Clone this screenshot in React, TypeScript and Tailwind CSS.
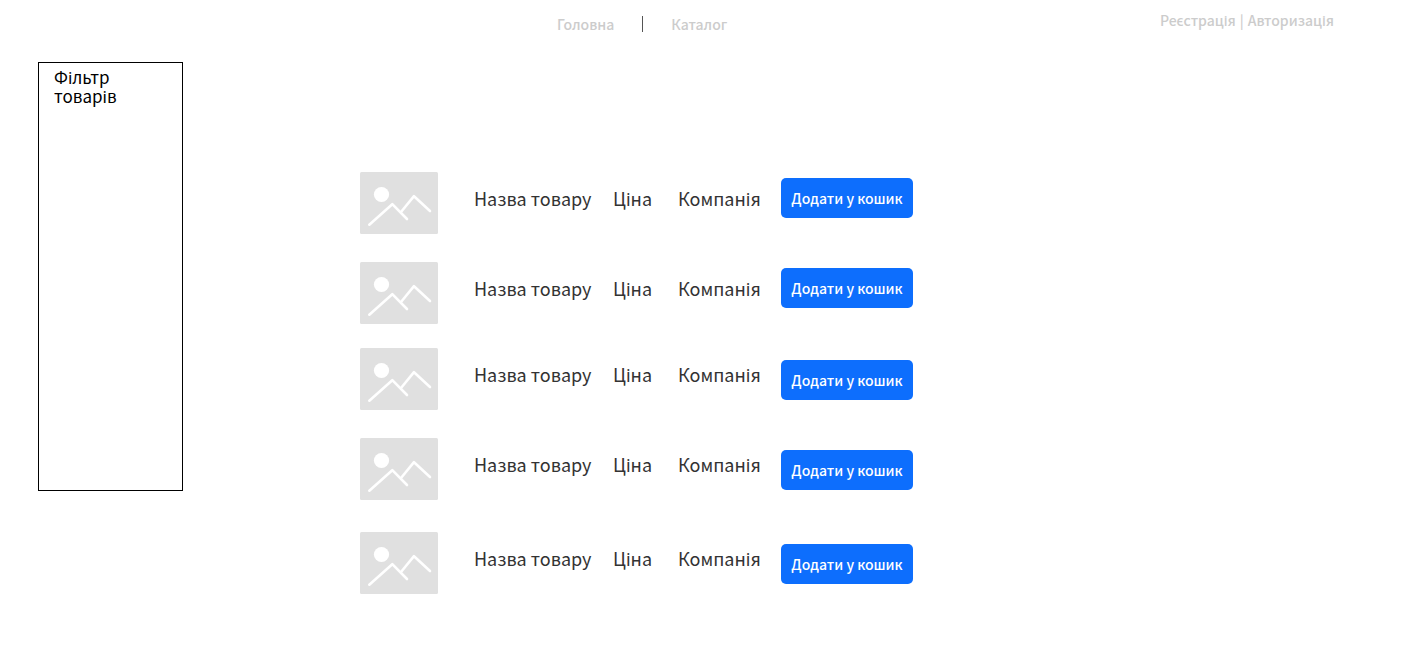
type Product = {
  id: number;
  name: string;
  price: string;
  company: string;
  rowSpacing: string;
  buttonSpacing: string;
};

const base = { name: 'Назва товару', price: 'Ціна', company: 'Компанія' };

const products: Product[] = [
  { id: 1, ...base, rowSpacing: 'mt-0', buttonSpacing: 'mt-1.5' },
  { id: 2, ...base, rowSpacing: 'mt-7', buttonSpacing: 'mt-1.5' },
  { id: 3, ...base, rowSpacing: 'mt-6', buttonSpacing: 'mt-3' },
  { id: 4, ...base, rowSpacing: 'mt-7', buttonSpacing: 'mt-3' },
  { id: 5, ...base, rowSpacing: 'mt-8', buttonSpacing: 'mt-3' },
];

function ImagePlaceholder() {
  return (
    <svg viewBox="0 0 78 62" className="h-[62px] w-[78px] shrink-0" aria-hidden="true">
      <rect width="78" height="62" rx="1.5" fill="#e0e0e0" />
      <circle cx="21.5" cy="22.5" r="7.6" fill="#fff" />
      <g fill="none" stroke="#fff" strokeWidth="2.6" strokeLinecap="round" strokeLinejoin="round">
        <path d="M9.3 52.7 L32.3 32.2 L47 47" />
        <path d="M41 40 L54 24.2 L70 39" />
      </g>
    </svg>
  );
}

function ProductRow({ product }: { product: Product }) {
  return (
    <li className={`flex items-start ${product.rowSpacing}`}>
      <ImagePlaceholder />
      <div className="ml-9 flex h-13 items-center text-[18px] leading-6 whitespace-nowrap text-[#333333]">
        <span className="w-[139px]">{product.name}</span>
        <span className="w-[65px]">{product.price}</span>
        <span className="w-[103px]">{product.company}</span>
      </div>
      <button
        type="button"
        className={`h-10 w-[132px] shrink-0 rounded-[5px] bg-[#0d6efd] text-[14px] leading-6 font-medium whitespace-nowrap text-white ${product.buttonSpacing}`}
      >
        Додати у кошик
      </button>
    </li>
  );
}

export default function App() {
  return (
    <div className="min-h-screen bg-white font-['Noto_Sans_CJK_SC','Noto_Sans',sans-serif]">
      <header className="flex h-[62px] items-start pr-[85px] pl-[557px] text-[14px] leading-6 font-medium whitespace-nowrap text-[#cccccc]">
        <nav className="flex items-center pt-3" aria-label="Головне меню">
          <a href="#home">Головна</a>
          <span className="mx-7 h-4 w-px bg-[#555555]" />
          <a href="#catalog">Каталог</a>
        </nav>
        <div className="ml-auto flex gap-1 pt-2">
          <a href="#register">Реєстрація</a>
          <span>|</span>
          <a href="#login">Авторизація</a>
        </div>
      </header>
      <main className="flex items-start pl-[38px]">
        <aside className="h-[429px] w-[145px] shrink-0 border border-black px-[15px] pt-1">
          <h2 className="w-20 text-[17px] leading-[19px] font-normal text-black">Фільтр товарів</h2>
        </aside>
        <ul className="ml-[177px] pt-[110px]">
          {products.map((product) => (
            <ProductRow key={product.id} product={product} />
          ))}
        </ul>
      </main>
    </div>
  );
}
